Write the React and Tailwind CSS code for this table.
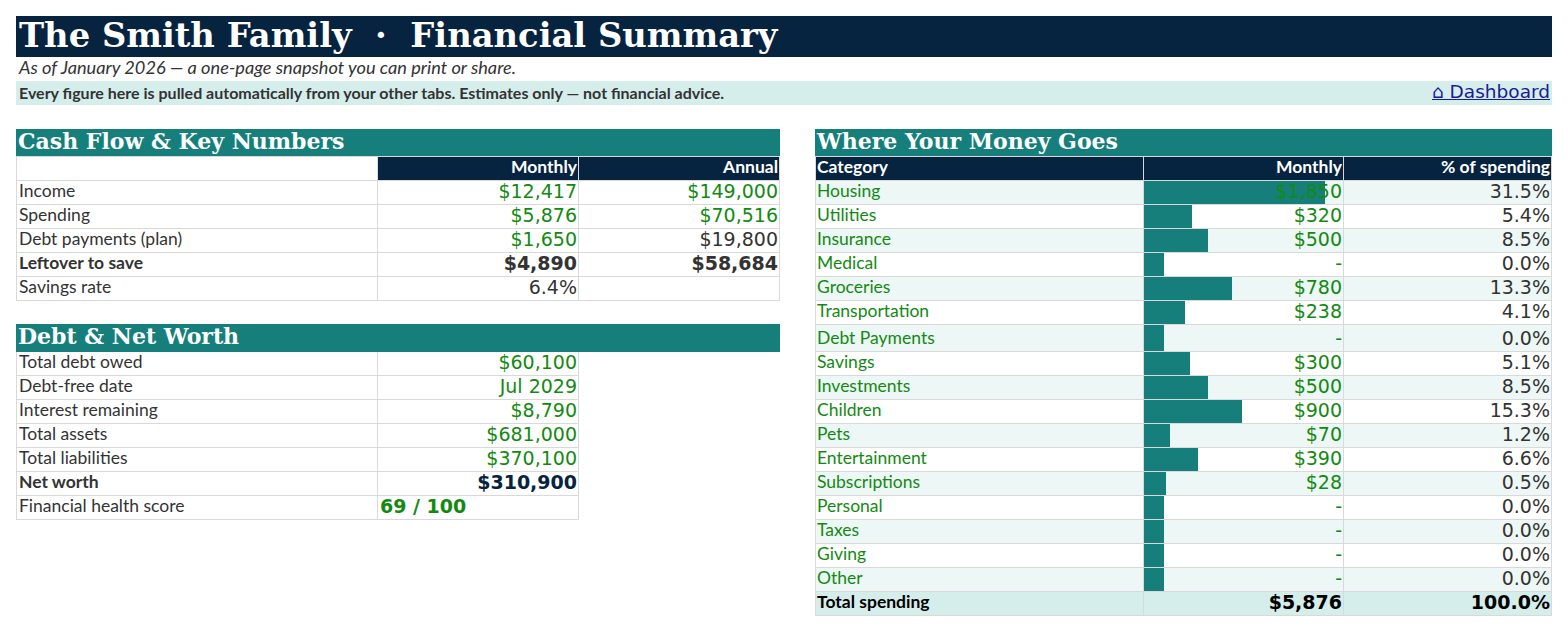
import React from "react";

const serif = "font-['DejaVu_Serif',serif]";
const lato = "font-['Lato',sans-serif]";
const dv = "font-['DejaVu_Sans',sans-serif]";

const cashRows = [
  { label: "Income", m: "$12,417", a: "$149,000", mc: "text-[#128a12]", ac: "text-[#128a12]" },
  { label: "Spending", m: "$5,876", a: "$70,516", mc: "text-[#128a12]", ac: "text-[#128a12]" },
  { label: "Debt payments (plan)", m: "$1,650", a: "$19,800", mc: "text-[#128a12]", ac: "text-[#333]" },
  { label: "Leftover to save", m: "$4,890", a: "$58,684", mc: "text-[#333]", ac: "text-[#333]", bold: true },
  { label: "Savings rate", m: "6.4%", a: "", mc: "text-[#333]", ac: "text-[#333]" },
];

const debtRows = [
  { label: "Total debt owed", v: "$60,100" },
  { label: "Debt-free date", v: "Jul 2029" },
  { label: "Interest remaining", v: "$8,790" },
  { label: "Total assets", v: "$681,000" },
  { label: "Total liabilities", v: "$370,100" },
  { label: "Net worth", v: "$310,900", net: true },
  { label: "Financial health score", v: "69 / 100", score: true },
];

const spend = [
  ["Housing", 1850, "31.5%"],
  ["Utilities", 320, "5.4%"],
  ["Insurance", 500, "8.5%"],
  ["Medical", 0, "0.0%"],
  ["Groceries", 780, "13.3%"],
  ["Transportation", 238, "4.1%"],
  ["Debt Payments", 0, "0.0%"],
  ["Savings", 300, "5.1%"],
  ["Investments", 500, "8.5%"],
  ["Children", 900, "15.3%"],
  ["Pets", 70, "1.2%"],
  ["Entertainment", 390, "6.6%"],
  ["Subscriptions", 28, "0.5%"],
  ["Personal", 0, "0.0%"],
  ["Taxes", 0, "0.0%"],
  ["Giving", 0, "0.0%"],
  ["Other", 0, "0.0%"],
];

// spreadsheet-ish cells: text sits at the bottom of the cell
const cell = "border-r border-b border-[#d9d9d9] flex items-end leading-none";
const label = `${lato} text-[17.5px] pb-[5px]`;
const num = `${dv} text-[19px] pb-[3px]`;

function SectionHead({ title, h = "h-[27px]" }) {
  return (
    <div className={`${h} bg-[#167f7b] flex items-center px-[2px] pb-[4px]`}>
      <span className={`${serif} font-bold text-[22px] text-white leading-none`}>{title}</span>
    </div>
  );
}

function CashFlow() {
  return (
    <div>
      <SectionHead title="Cash Flow & Key Numbers" />
      <div className={`flex h-[25px] border-t border-[#d9d9d9] ${lato} font-bold text-[17.5px] text-white`}>
        <div className={`${cell} w-[362px] border-l bg-white`}></div>
        <div className={`${cell} w-[201px] bg-[#062340] justify-end pr-[1px] pb-[5px]`}>Monthly</div>
        <div className={`${cell} w-[201px] bg-[#062340] justify-end pr-[1px] pb-[5px]`}>Annual</div>
      </div>
      {cashRows.map((r) => (
        <div key={r.label} className="flex h-[24px]">
          <div className={`${cell} w-[362px] border-l pl-[2px] ${label} text-[#333] ${r.bold ? "font-bold" : ""}`}>{r.label}</div>
          <div className={`${cell} w-[201px] justify-end pr-[1px] ${num} ${r.mc} ${r.bold ? "font-bold" : ""}`}>{r.m}</div>
          <div className={`${cell} w-[201px] justify-end pr-[1px] ${num} ${r.ac} ${r.bold ? "font-bold" : ""}`}>{r.a}</div>
        </div>
      ))}
    </div>
  );
}

function DebtNetWorth() {
  return (
    <div className="mt-[23px]">
      <SectionHead title="Debt & Net Worth" h="h-[28px]" />
      {debtRows.map((r) => (
        <div key={r.label} className="flex h-[24px]">
          <div className={`${cell} w-[362px] border-l pl-[2px] ${label} text-[#333] ${r.net ? "font-bold" : ""}`}>{r.label}</div>
          <div
            className={`${cell} w-[201px] ${num} ${
              r.score
                ? "justify-start pl-[2px] font-bold text-[#128a12]"
                : r.net
                ? "justify-end pr-[1px] font-bold text-[#062340]"
                : "justify-end pr-[1px] text-[#128a12]"
            }`}
          >
            {r.v}
          </div>
        </div>
      ))}
    </div>
  );
}

function MoneyGoes() {
  return (
    <div>
      <SectionHead title="Where Your Money Goes" />
      <div className={`flex h-[25px] border-t border-[#d9d9d9] ${lato} font-bold text-[17.5px] text-white`}>
        <div className={`${cell} w-[329px] border-l bg-[#062340] pl-[1px] pb-[5px]`}>Category</div>
        <div className={`${cell} w-[200px] bg-[#062340] justify-end pr-[1px] pb-[5px]`}>Monthly</div>
        <div className={`${cell} w-[208px] bg-[#062340] justify-end pr-[1px] pb-[5px]`}>% of spending</div>
      </div>
      {spend.map(([name, amt, pct], i) => {
        const bg = i % 2 === 0 ? "bg-[#edf7f5]" : "bg-white";
        const h = name === "Debt Payments" ? "h-[27px]" : "h-[24px]";
        const barW = Math.round(20 + (amt / 1850) * 161);
        return (
          <div key={name} className={`flex ${h} ${bg}`}>
            <div className={`${cell} w-[329px] border-l pl-[1px] ${label} text-[#128a12]`}>{name}</div>
            <div className={`${cell} relative w-[200px] justify-end pr-[1px] ${num} text-[#128a12]`}>
              <div className="absolute left-0 top-0 bottom-0 bg-[#167f7b]" style={{ width: barW }} />
              <span className="relative">{amt ? "$" + amt.toLocaleString("en-US") : "-"}</span>
            </div>
            <div className={`${cell} w-[208px] justify-end pr-[1px] ${num} text-[#333]`}>{pct}</div>
          </div>
        );
      })}
      <div className="flex h-[24px] bg-[#d5eeeb] font-bold text-black">
        <div className={`${cell} w-[329px] border-l pl-[1px] ${label}`}>Total spending</div>
        <div className={`${cell} w-[200px] justify-end pr-[1px] ${num}`}>$5,876</div>
        <div className={`${cell} w-[208px] justify-end pr-[1px] ${num}`}>100.0%</div>
      </div>
    </div>
  );
}

export default function App() {
  return (
    <div className="bg-white min-h-[632px] pl-4 pt-4">
      <div className="w-[1536px]">
        <div className="h-[41px] bg-[#062340] flex items-center px-[3px] pb-[2px]">
          <h1 className={`${serif} font-bold text-[33.75px] text-white leading-none`}>
            The Smith Family&nbsp; ·&nbsp; Financial Summary
          </h1>
        </div>
        <div className={`h-[24px] flex items-center pl-[3px] pb-[4px] ${lato} italic text-[18.2px] text-[#333] leading-none`}>
          As of January 2026 — a one-page snapshot you can print or share.
        </div>
        <div className="h-[24px] bg-[#d5eeeb] flex items-center justify-between pl-[3px] pr-[2px]">
          <span className={`${lato} font-bold text-[16px] text-[#333] leading-none`}>
            Every figure here is pulled automatically from your other tabs. Estimates only — not financial advice.
          </span>
          <a href="#" className={`${dv} text-[18.5px] text-[#1a1a99] underline leading-none mb-[2px]`}>⌂ Dashboard</a>
        </div>
        <div className="flex mt-[24px] gap-[35px]">
          <div className="w-[764px]">
            <CashFlow />
            <DebtNetWorth />
          </div>
          <div className="w-[737px]">
            <MoneyGoes />
          </div>
        </div>
      </div>
    </div>
  );
}
